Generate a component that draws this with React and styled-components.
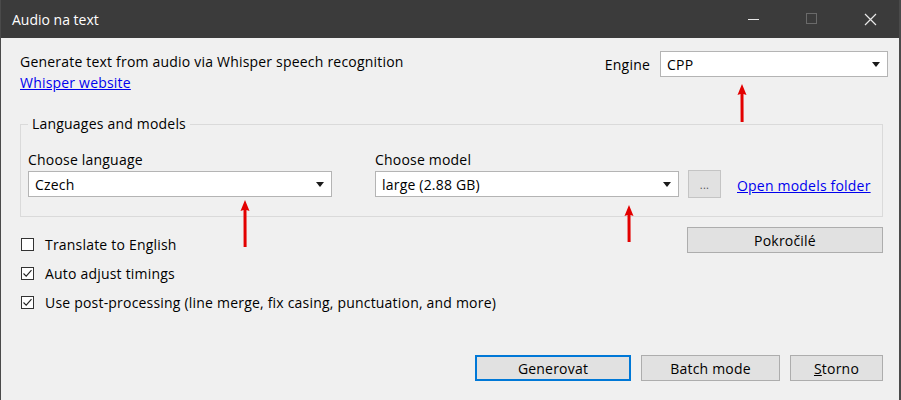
import React from 'react'
import styled, { createGlobalStyle } from 'styled-components'

const GlobalStyle = createGlobalStyle`
  html, body {
    margin: 0;
    padding: 0;
    background: #f0f0f0;
  }
  body {
    font-family: 'Open Sans', 'Noto Sans', sans-serif;
    font-size: 14px;
    letter-spacing: 0.2px;
    color: #000;
  }
`

const Window = styled.div`
  position: relative;
  width: 901px;
  height: 400px;
  box-sizing: border-box;
  display: flex;
  flex-direction: column;
  background: #f0f0f0;
  border-left: 1px solid #4a4a4a;
  border-right: 2px solid #4a4a4a;
  overflow: hidden;
`

const TitleBar = styled.div`
  height: 38px;
  flex-shrink: 0;
  display: flex;
  align-items: center;
  background: #3b3b3b;
  color: #fff;
  font-size: 14px;
  letter-spacing: 0;
  padding-left: 11px;
`

const TitleText = styled.div`
  flex: 1;
`

const CaptionButton = styled.div`
  width: 58px;
  height: 38px;
  display: flex;
  align-items: center;
  justify-content: center;
  color: ${p => (p.disabled ? '#6a6a6a' : '#e8e8e8')};
`

const Body = styled.div`
  flex: 1;
  display: flex;
  flex-direction: column;
  padding: 13px 16px 19px 19px;
`

const TopRow = styled.div`
  display: flex;
  justify-content: space-between;
  align-items: flex-start;
  margin-right: -5px;
`

const Intro = styled.div`
  line-height: 21px;
`

const Link = styled.a`
  display: ${p => (p.block ? 'block' : 'inline')};
  color: #0000ee;
  text-decoration: underline;
  cursor: pointer;
`

const EngineRow = styled.div`
  display: flex;
  align-items: center;
  gap: 10px;
`

const Combo = styled.div`
  width: ${p => p.width}px;
  height: 26px;
  box-sizing: border-box;
  display: flex;
  align-items: center;
  justify-content: space-between;
  background: #fff;
  border: 1px solid #b4b4b4;
  padding: 0 7px 0 6px;
`

const Caret = styled.span`
  width: 0;
  height: 0;
  border-left: 4.5px solid transparent;
  border-right: 4.5px solid transparent;
  border-top: 5px solid #1a1a1a;
`

const Group = styled.fieldset`
  margin: 21px 0 0;
  padding: 17px 7px 19px;
  border: 1px solid #dadada;
  min-width: 0;
`

const Legend = styled.legend`
  padding: 0 4px;
  line-height: 20px;
`

const GroupRow = styled.div`
  display: flex;
  align-items: flex-end;
`

const Field = styled.div`
  display: flex;
  flex-direction: column;
  gap: 2px;
  margin-right: ${p => p.gap || 0}px;
`

const FieldLabel = styled.div`
  line-height: 18px;
`

const SmallButton = styled.div`
  width: 33px;
  height: 28px;
  box-sizing: border-box;
  margin-bottom: -1px;
  display: flex;
  align-items: center;
  justify-content: center;
  background: #e1e1e1;
  border: 1px solid #c4c4c4;
  color: #555;
  font-size: 11px;
  margin-right: 16px;
`

const LinkWrap = styled.div`
  line-height: 20px;
  margin-bottom: 1px;
`

const OptionsRow = styled.div`
  display: flex;
  justify-content: space-between;
  align-items: flex-start;
  margin-top: 10px;
`

const CheckList = styled.div`
  padding-top: 3px;
  margin-left: 1px;
`

const CheckRow = styled.label`
  display: flex;
  align-items: center;
  height: 29px;
  gap: 11px;
`

const Box = styled.span`
  width: 13px;
  height: 13px;
  box-sizing: border-box;
  border: 1px solid #333;
  background: #fff;
  display: flex;
  align-items: center;
  justify-content: center;
`

const Button = styled.div`
  width: ${p => p.width}px;
  height: 26px;
  box-sizing: border-box;
  display: flex;
  align-items: center;
  justify-content: center;
  background: #e1e1e1;
  border: ${p => (p.primary ? '2px solid #0078d7' : '1px solid #adadad')};
  color: #000;
`

const Footer = styled.div`
  margin-top: auto;
  display: flex;
  justify-content: flex-end;
  gap: 10px;
`

const Arrow = styled.svg`
  position: absolute;
  left: ${p => p.x - 7}px;
  top: ${p => p.y}px;
`

function CheckBox({ checked, children }) {
  return (
    <CheckRow>
      <Box>
        {checked && (
          <svg width="11" height="11" viewBox="0 0 11 11">
            <path d="M1.5 5.5 L4.2 8.2 L9.5 2.2" fill="none" stroke="#222" strokeWidth="1.1" />
          </svg>
        )}
      </Box>
      <span>{children}</span>
    </CheckRow>
  )
}

function RedArrow({ x, y, length }) {
  return (
    <Arrow x={x} y={y} width="14" height={length} viewBox={`0 0 14 ${length}`}>
      <path d={`M7 0 L11.5 11 L8.5 10 L8.6 ${length} L5.6 ${length} L5.5 10 L2.5 11 Z`} fill="#e30000" />
    </Arrow>
  )
}

export default function App() {
  return (
    <Window>
      <GlobalStyle />
      <TitleBar>
        <TitleText>Audio na text</TitleText>
        <CaptionButton>
          <svg width="12" height="12" viewBox="0 0 12 12">
            <line x1="0" y1="6.5" x2="11" y2="6.5" stroke="currentColor" strokeWidth="1" />
          </svg>
        </CaptionButton>
        <CaptionButton disabled>
          <svg width="12" height="12" viewBox="0 0 12 12">
            <rect x="0.5" y="0.5" width="10" height="10" fill="none" stroke="currentColor" strokeWidth="1" />
          </svg>
        </CaptionButton>
        <CaptionButton>
          <svg width="13" height="13" viewBox="0 0 13 13">
            <path d="M1 1 L12 12 M12 1 L1 12" stroke="currentColor" strokeWidth="1.2" />
          </svg>
        </CaptionButton>
      </TitleBar>

      <Body>
        <TopRow>
          <Intro>
            <div>Generate text from audio via Whisper speech recognition</div>
            <Link block>Whisper website</Link>
          </Intro>
          <EngineRow>
            <span>Engine</span>
            <Combo width={228}>
              <span>CPP</span>
              <Caret />
            </Combo>
          </EngineRow>
        </TopRow>

        <Group>
          <Legend>Languages and models</Legend>
          <GroupRow>
            <Field gap={43}>
              <FieldLabel>Choose language</FieldLabel>
              <Combo width={304}>
                <span>Czech</span>
                <Caret />
              </Combo>
            </Field>
            <Field gap={9}>
              <FieldLabel>Choose model</FieldLabel>
              <Combo width={304}>
                <span>large (2.88 GB)</span>
                <Caret />
              </Combo>
            </Field>
            <SmallButton>...</SmallButton>
            <LinkWrap>
              <Link>Open models folder</Link>
            </LinkWrap>
          </GroupRow>
        </Group>

        <OptionsRow>
          <CheckList>
            <CheckBox>Translate to English</CheckBox>
            <CheckBox checked>Auto adjust timings</CheckBox>
            <CheckBox checked>Use post-processing (line merge, fix casing, punctuation, and more)</CheckBox>
          </CheckList>
          <Button width={196}>Pokročilé</Button>
        </OptionsRow>

        <Footer>
          <Button primary width={156}>Generovat</Button>
          <Button width={139}>Batch mode</Button>
          <Button width={93}>
            <span><u>S</u>torno</span>
          </Button>
        </Footer>
      </Body>

      <RedArrow x={741} y={84} length={38} />
      <RedArrow x={244} y={200} length={47} />
      <RedArrow x={628} y={205} length={37} />
    </Window>
  )
}
